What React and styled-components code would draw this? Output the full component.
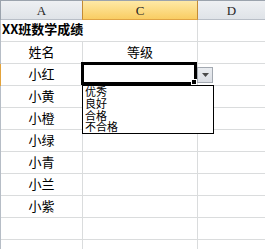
import React from "react";
import styled, { createGlobalStyle } from "styled-components";

const names = ["小红", "小黄", "小橙", "小绿", "小青", "小兰", "小紫", "", ""];
const options = ["优秀", "良好", "合格", "不合格"];

function App() {
  return (
    <>
      <GlobalStyle />
      <Sheet>
        <Edge $header />
        <ColHead>A</ColHead>
        <ColHead $active>C</ColHead>
        <ColHead $last>D</ColHead>

        <Edge />
        <Title>XX班数学成绩</Title>
        <Cell />
        <Cell $last />

        <Edge />
        <Cell $center>姓名</Cell>
        <Cell $center>等级</Cell>
        <Cell $last />

        {names.map((n, i) => (
          <React.Fragment key={i}>
            <Edge $active={i === 0} />
            <Cell $center>{n}</Cell>
            <Cell>
              {i === 0 && (
                <>
                  <Selection>
                    <FillHandle />
                  </Selection>
                  <DropButton>
                    <svg width="7" height="4" viewBox="0 0 7 4">
                      <path d="M0 0h7L3.5 4z" fill="#4a4a4a" />
                    </svg>
                  </DropButton>
                  <DropList>
                    {options.map((o) => (
                      <Option key={o}>{o}</Option>
                    ))}
                  </DropList>
                </>
              )}
            </Cell>
            <Cell $last />
          </React.Fragment>
        ))}
      </Sheet>
    </>
  );
}

const GlobalStyle = createGlobalStyle`
  html, body {
    margin: 0;
    padding: 0;
    background: #fff;
    overflow: hidden;
  }
  body {
    font-family: "Noto Sans CJK SC", "Noto Sans", sans-serif;
  }
`;

const Sheet = styled.div`
  display: grid;
  grid-template-columns: 1px 82px 115px 67px;
  grid-template-rows: 20px repeat(11, 22px);
  width: 265px;
  height: 249px;
  overflow: hidden;
`;

const Edge = styled.div`
  background: ${(p) =>
    p.$header ? "#9ba3ad" : p.$active ? "#e3a33b" : "#b6bdc6"};
`;

const ColHead = styled.div`
  display: flex;
  align-items: center;
  justify-content: center;
  box-sizing: border-box;
  border-top: 1px solid #9ba3ad;
  border-bottom: 1px solid ${(p) => (p.$active ? "#e0a445" : "#b8bec7")};
  border-right: ${(p) => (p.$last ? "none" : "1px solid")};
  border-right-color: ${(p) => (p.$active ? "#c38b35" : "#b8bec7")};
  border-left: ${(p) => (p.$active ? "1px solid #c38b35" : "none")};
  margin-left: ${(p) => (p.$active ? "-1px" : "0")};
  background: ${(p) =>
    p.$active
      ? "linear-gradient(#fee9a6, #f9cd63)"
      : "linear-gradient(#eef0f3, #dfe3e8)"};
  font-family: "Liberation Serif", serif;
  font-size: 13px;
  color: #262626;
  padding-top: 1px;
`;

const Cell = styled.div`
  position: relative;
  display: flex;
  align-items: center;
  justify-content: ${(p) => (p.$center ? "center" : "flex-start")};
  box-sizing: border-box;
  border-bottom: 1px solid #dadcdd;
  border-right: ${(p) => (p.$last ? "none" : "1px solid #dadcdd")};
  font-size: 13px;
  color: #000;
  padding-bottom: 2px;
`;

const Title = styled(Cell)`
  border-right: none;
  white-space: nowrap;
  overflow: visible;
  font-weight: bold;
  padding-left: 1px;
  padding-bottom: 4px;
  z-index: 1;
`;

const Selection = styled.div`
  position: absolute;
  top: -2px;
  left: -2px;
  right: 0;
  bottom: 0;
  border: 3px solid #000;
  pointer-events: none;
`;

const FillHandle = styled.span`
  position: absolute;
  right: -3px;
  bottom: -3px;
  width: 4px;
  height: 4px;
  background: #000;
  border: 1px solid #fff;
`;

const DropButton = styled.div`
  position: absolute;
  top: 3px;
  left: 114px;
  width: 16px;
  height: 16px;
  box-sizing: border-box;
  display: flex;
  align-items: center;
  justify-content: center;
  background: linear-gradient(#e9ecf0, #dcdfe5);
  border: 1px solid #a3a9b1;
  z-index: 3;
`;

const DropList = styled.div`
  position: absolute;
  top: 21px;
  left: -1px;
  width: 132px;
  box-sizing: border-box;
  border: 1px solid #000;
  background: #fff;
  padding: 0 0 0 2px;
  z-index: 2;
`;

const Option = styled.div`
  font-family: "Noto Sans CJK SC", sans-serif;
  font-size: 11px;
  line-height: 11.75px;
  color: #000;
  white-space: nowrap;
`;

export default App;
